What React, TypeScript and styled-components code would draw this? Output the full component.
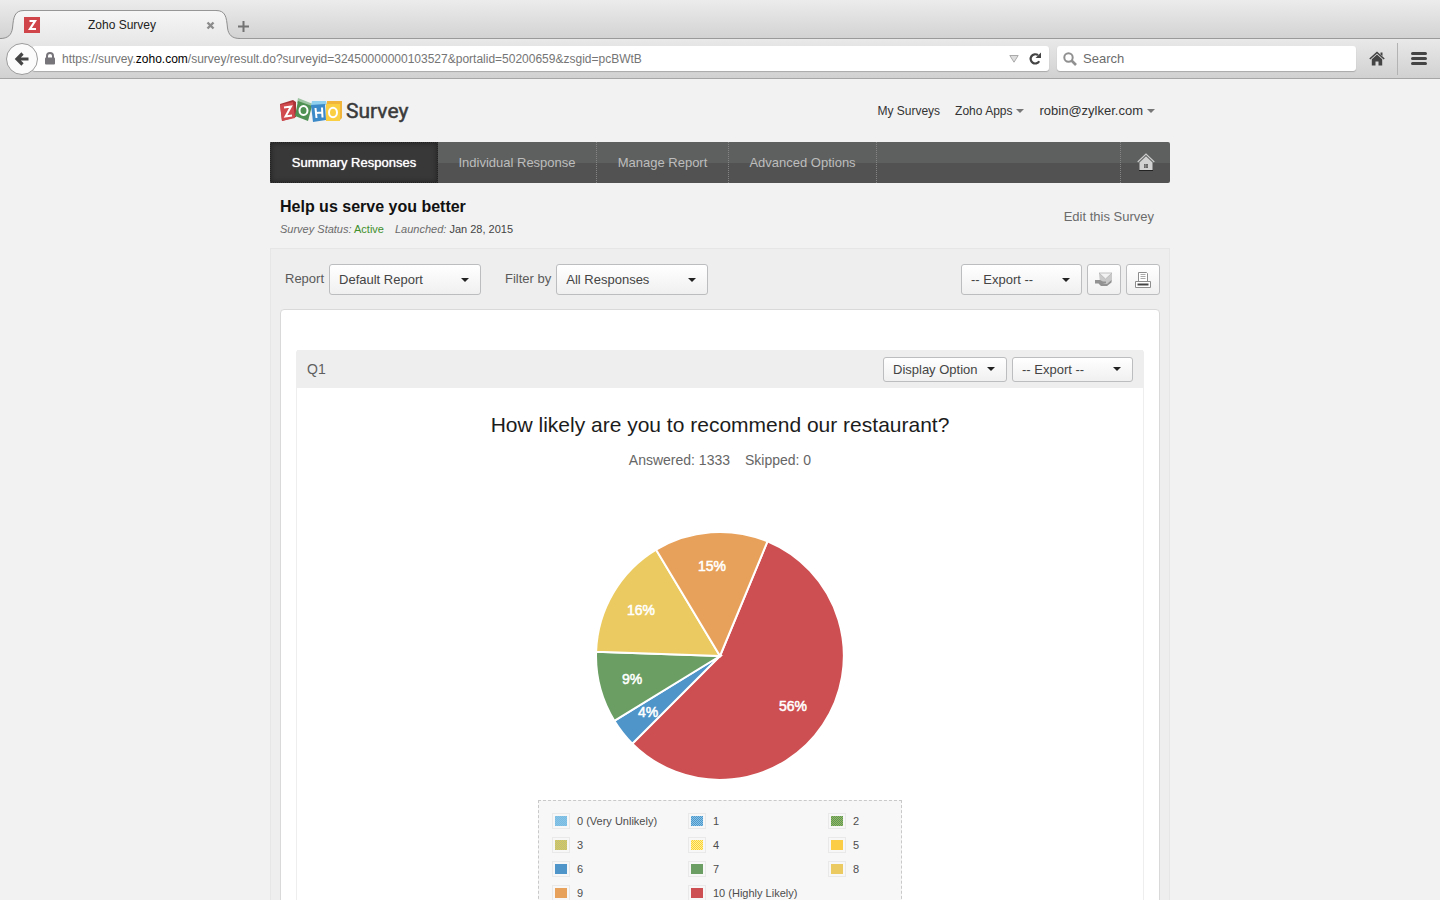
import React from "react";
import styled, { createGlobalStyle } from "styled-components";

const GlobalStyle = createGlobalStyle`
  *, *::before, *::after { box-sizing: border-box; }
  body { margin: 0; background: #f2f2f2; }
  body, button, input, select {
    font-family: "Liberation Sans", Arial, Helvetica, sans-serif;
    font-size: 13px;
  }
  button { padding: 0; border: 0; background: none; cursor: pointer; }
  a { color: inherit; text-decoration: none; }
  h1, h2, p, ul { margin: 0; padding: 0; }
  svg { display: block; flex: none; }
`;

/* ---------- browser window ---------- */

const Window = styled.div`
  display: flex;
  flex-direction: column;
  height: 100vh;
`;

const TabBar = styled.div`
  display: flex;
  align-items: flex-end;
  height: 39px;
  flex: none;
  background: linear-gradient(#ececec, #d2d2d2);
  box-shadow: inset 0 -1px #9a9a9a;
`;

const TabBody = styled.div`
  display: flex;
  align-items: center;
  width: 192px;
  height: 29px;
  border-top: 1px solid #979797;
  background: linear-gradient(#f6f6f6, #e9e9e9);
`;

const Favicon = styled.span`
  display: block;
  width: 16px;
  height: 16px;
`;

const TabTitle = styled.span`
  flex: 1;
  text-align: center;
  font-size: 12px;
  line-height: 16px;
  color: #222;
`;

const IconButton = styled.button<{ $width: number; $height: number }>`
  display: flex;
  align-items: center;
  justify-content: center;
  flex: none;
  width: ${(p) => p.$width}px;
  height: ${(p) => p.$height}px;
`;

const Toolbar = styled.div`
  display: flex;
  align-items: center;
  flex: none;
  height: 40px;
  padding-left: 6px;
  border-bottom: 1px solid #a6a6a6;
  background: linear-gradient(#e9e9e9, #d1d1d1);
`;

const BackButton = styled.button`
  display: flex;
  align-items: center;
  justify-content: center;
  flex: none;
  z-index: 1;
  width: 32px;
  height: 32px;
  border: 1px solid #9b9b9b;
  border-radius: 50%;
  background: #fbfbfb;
`;

const Field = styled.div<{ $width?: number }>`
  display: flex;
  align-items: center;
  flex: ${(p) => (p.$width ? `0 0 ${p.$width}px` : "1")};
  height: 25px;
  border-radius: 3px;
  background: #fff;
  box-shadow: 0 1px 1px #a9a9a9;
`;

const AddressField = styled(Field)`
  margin: 0 8px 0 -6px;
  padding-left: 12px;
`;

const Address = styled.span`
  flex: 1;
  padding-left: 6px;
  font-size: 12px;
  line-height: 16px;
  color: #757575;
  white-space: nowrap;

  strong { font-weight: 400; color: #000; }
`;

const SearchInput = styled.input`
  flex: 1;
  min-width: 0;
  padding: 0;
  border: 0;
  outline: 0;
  background: none;

  &::placeholder { color: #6c6c6c; opacity: 1; }
`;

const Divider = styled.span`
  width: 1px;
  height: 32px;
  background: #b3b3b3;
`;

/* ---------- page ---------- */

const Viewport = styled.main`
  flex: 1;
  min-height: 0;
  overflow-y: auto;
  scrollbar-width: none;
`;

const Page = styled.div`
  width: 100%;
  max-width: 900px;
  margin: 0 auto;
`;

const Header = styled.header`
  display: flex;
  align-items: center;
  justify-content: space-between;
  height: 63px;
  padding: 0 15px 0 10px;
`;

const Logo = styled.a`
  display: flex;
  align-items: center;
  gap: 4px;
`;

const LogoName = styled.span`
  font-family: Roboto, "Liberation Sans", Arial, sans-serif;
  font-size: 21px;
  line-height: 26px;
  color: #3b3b3b;
  -webkit-text-stroke: 0.5px #3b3b3b;
`;

const HeaderLinks = styled.nav`
  display: flex;
  align-items: center;
  gap: 15px;
  font-size: 12px;
  line-height: 16px;
  color: #333;
`;

const MenuLink = styled.a<{ $size?: number }>`
  display: flex;
  align-items: center;
  gap: 4px;
  font-size: ${(p) => p.$size ?? 12}px;
`;

const Caret = styled.span<{ $color: string }>`
  border: 4px solid transparent;
  border-top-color: ${(p) => p.$color};
  border-bottom-width: 0;
`;

const NavBar = styled.nav`
  display: flex;
  height: 41px;
  overflow: hidden;
  border-radius: 2px;
  background: linear-gradient(#5e605f 0 52%, #525252 52% 100%);
`;

const NavItem = styled.a<{ $width: number; $active?: boolean }>`
  display: flex;
  align-items: center;
  justify-content: center;
  flex: 0 0 ${(p) => p.$width}px;
  border-right: 1px dotted #858585;
  color: #bdbdbd;
  ${(p) =>
    p.$active &&
    `
    border: 1px dotted #222;
    background: #383838;
    box-shadow: inset 0 0 5px #222;
    color: #fff;
    text-shadow: 0 0 1px #fff;
  `}
`;

const NavHome = styled.a`
  display: flex;
  align-items: center;
  justify-content: center;
  width: 50px;
  margin-left: auto;
  padding-bottom: 2px;
  border-left: 1px dotted #858585;
`;

const TitleRow = styled.section`
  display: flex;
  align-items: center;
  justify-content: space-between;
  height: 65px;
  padding: 2px 16px 0 10px;
  color: #6b6b6b;
`;

const SurveyTitle = styled.h1`
  font-size: 16px;
  line-height: 20px;
  color: #111;
`;

const StatusLine = styled.p`
  display: flex;
  gap: 11px;
  padding: 5px 0 1px;
  font-size: 11px;
  line-height: 14px;
`;

const StatusValue = styled.span<{ $color: string }>`
  color: ${(p) => p.$color};
`;

const Panel = styled.section`
  padding: 15px 9px 0;
  border: 1px solid #e6e6e6;
  border-bottom: 0;
  background: #eee;
`;

const Controls = styled.div`
  display: flex;
  align-items: center;
  height: 31px;
  gap: 5px;
  padding-left: 5px;
`;

const ControlLabel = styled.label<{ $after?: number }>`
  margin-left: ${(p) => p.$after ?? 0}px;
  padding-bottom: 1px;
  line-height: 16px;
  color: #5a5a5a;
`;

const Spacer = styled.span`
  flex: 1;
`;

const SelectBox = styled.span<{ $width: number; $height: number }>`
  position: relative;
  flex: none;
  width: ${(p) => p.$width}px;
  height: ${(p) => p.$height}px;

  &::after {
    content: "";
    position: absolute;
    top: 50%;
    right: 12px;
    margin-top: -2px;
    border: 4px solid transparent;
    border-top: 4px solid #222;
    border-bottom-width: 0;
    pointer-events: none;
  }
`;

const SelectControl = styled.select`
  appearance: none;
  width: 100%;
  height: 100%;
  padding: 0 20px 0 9px;
  border: 1px solid #bcbdbf;
  border-radius: 3px;
  background: linear-gradient(#fff, #f0f0f0);
  color: #444;
`;

const SquareButton = styled.button`
  display: flex;
  align-items: center;
  justify-content: center;
  width: 34px;
  height: 31px;
  border: 1px solid #bcbdbf;
  border-radius: 3px;
  background: linear-gradient(#fff, #f0f0f0);
`;

const Paper = styled.div`
  margin-top: 14px;
  padding: 40px 15px 20px;
  border: 1px solid #d9d9d9;
  border-radius: 4px 4px 0 0;
  background: #fff;
`;

const Question = styled.article`
  border: 1px solid #eee;
  border-top: 0;
  border-radius: 3px 3px 0 0;
`;

const QuestionBar = styled.div`
  display: flex;
  align-items: center;
  gap: 5px;
  height: 38px;
  padding: 0 10px;
  background: #eee;
`;

const QuestionNumber = styled.span`
  flex: 1;
  font-size: 14px;
  line-height: 16px;
  color: #5f5f5f;
`;

const QuestionBody = styled.div`
  display: flex;
  flex-direction: column;
  align-items: center;
  padding: 23px 0 40px;
`;

const QuestionTitle = styled.h2`
  font-size: 21px;
  font-weight: 400;
  line-height: 28px;
  color: #1c1c1c;
`;

const Counts = styled.p`
  display: flex;
  gap: 15px;
  padding-top: 13px;
  font-size: 14px;
  line-height: 16px;
  color: #666;
`;

const Chart = styled.svg`
  margin: 63px 0 19px;
  font-size: 14px;
  text-anchor: middle;
`;

const Legend = styled.ul`
  display: grid;
  grid-template-columns: 136px 140px 1fr;
  row-gap: 8px;
  width: 364px;
  padding: 12px 0 12px 13px;
  border: 1px dashed #c9c9c9;
  background: #f7f7f7;
  list-style: none;
`;

const LegendItem = styled.li`
  display: flex;
  align-items: center;
  gap: 7px;
  height: 16px;
  font-size: 11px;
  line-height: 16px;
  color: #4d4d4d;
`;

const Swatch = styled.span<{ $color: string; $mix?: string }>`
  width: 18px;
  height: 16px;
  border: 1px solid #e9e9e9;
  padding: 2px;

  &::before {
    content: "";
    display: block;
    height: 100%;
    background: ${(p) =>
      p.$mix
        ? `repeating-conic-gradient(${p.$mix} 0 25%, ${p.$color} 0 50%) 0 0 / 2px 2px`
        : p.$color};
  }
`;

const TabEdge = ({ flip }: { flip?: boolean }) => (
  <svg width="24" height="29" viewBox="0 0 24 29" aria-hidden="true">
    <defs>
      <linearGradient id="tabfill" x1="0" y1="0" x2="0" y2="1">
        <stop offset="0" stopColor="#f6f6f6" />
        <stop offset="1" stopColor="#e9e9e9" />
      </linearGradient>
    </defs>
    <g transform={flip ? "matrix(-1 0 0 1 24 0)" : undefined}>
      <path
        d="M0 28.5C8 28.5 11.500 25 12.500 18C13.500 7 14.500 .5 24 .5V29H0Z"
        fill="url(#tabfill)"
      />
      <path
        d="M0 28.500C8 28.500 11.500 25 12.500 18C13.500 7 14.500 .5 24 .5"
        fill="none"
        stroke="#8f8f8f"
      />
    </g>
  </svg>
);

const LogoBlocks = () => (
  <svg width="62" height="26" viewBox="0 0 62 26" role="img" aria-label="Zoho">
    <path d="M0 6L13 2L16 4V19L2 23Z" fill="#a93438" />
    <path d="M0 7L13 4L15 20L2 23Z" fill="#d04a4e" />
    <path d="M18 0L33 6L31 10L17 5Z" fill="#9cc4a0" />
    <path d="M18 3L32 8L28 23L15 18Z" fill="#4f9153" />
    <path d="M32 3L46 3L47 7L31 8Z" fill="#8fd0ee" />
    <path d="M31 7L45 6L46 22L33 24Z" fill="#3d8ac8" />
    <path d="M47 3H62V20L60 22H46Z" fill="#f0b53a" />
    <path d="M46 6H60V23H46Z" fill="#fbcf42" />
    <g fill="none" stroke="#fff" strokeWidth="2">
      <path d="M4 9.500L11 8.500L5.500 18.500L12 17.500" />
      <ellipse cx="23.500" cy="12.500" rx="4" ry="4.500" />
      <path d="M35.500 10L36.500 20M42 9.500L42.500 19.500M36 15L42 14.500" />
      <ellipse cx="53" cy="14.500" rx="4" ry="4.800" />
    </g>
  </svg>
);

const CX = 125;
const CY = 125;
const R = 124;

/* angles run clockwise from twelve o'clock, in degrees */
const slices = [
  { from: 22.5, to: 225, color: "#ce4f51", label: "56%", x: 198, y: 180 },
  { from: 225, to: 238.5, color: "#4f95ca", label: "4%", x: 53, y: 186 },
  { from: 238.5, to: 272, color: "#6a9e63", label: "9%", x: 37, y: 153 },
  { from: 272, to: 329, color: "#ebcb61", label: "16%", x: 46, y: 84 },
  { from: 329, to: 382.5, color: "#e8a15a", label: "15%", x: 117, y: 40 },
];

const point = (deg: number) => {
  const a = (deg * Math.PI) / 180;
  return `${(CX + R * Math.sin(a)).toFixed(1)} ${(CY - R * Math.cos(a)).toFixed(1)}`;
};

const legend: { label: string; color: string; mix?: string }[] = [
  { label: "0 (Very Unlikely)", color: "#86c5e8", mix: "#7ab9e0" },
  { label: "1", color: "#86c5e8", mix: "#4f95ca" },
  { label: "2", color: "#9fb561", mix: "#559a59" },
  { label: "3", color: "#e3cb5a", mix: "#b1bd83" },
  { label: "4", color: "#fff09a", mix: "#fbd034" },
  { label: "5", color: "#fbcd47" },
  { label: "6", color: "#4f95ca" },
  { label: "7", color: "#6a9e63" },
  { label: "8", color: "#ebcb61" },
  { label: "9", color: "#e8a15a" },
  { label: "10 (Highly Likely)", color: "#ce4f51" },
];

const Dropdown = ({
  id,
  value,
  label,
  width,
  height,
}: {
  id: string;
  value: string;
  label?: string;
  width: number;
  height: number;
}) => (
  <SelectBox $width={width} $height={height}>
    <SelectControl id={id} aria-label={label}>
      <option>{value}</option>
    </SelectControl>
  </SelectBox>
);

const BrowserChrome = () => (
  <>
    <TabBar>
      <TabEdge />
      <TabBody>
        <Favicon>
          <svg width="16" height="16" viewBox="0 0 16 16" aria-hidden="true">
            <path d="M0 0H16V16H0Z" fill="#cf4549" />
            <path d="M5.500 4H11L6 12H12" fill="none" stroke="#fff" strokeWidth="2.200" />
          </svg>
        </Favicon>
        <TabTitle>Zoho Survey</TabTitle>
        <IconButton $width={12} $height={20} aria-label="Close tab">
          <svg width="9" height="9" viewBox="0 0 9 9">
            <path d="M1.500 1.500L7.500 7.500M7.500 1.500L1.500 7.500" stroke="#8c8c8c" strokeWidth="2.400" />
          </svg>
        </IconButton>
      </TabBody>
      <TabEdge flip />
      <IconButton $width={6} $height={26} aria-label="New tab">
        <svg width="11" height="11" viewBox="0 0 11 11">
          <path d="M5.500 0V11M0 5.500H11" stroke="#737373" strokeWidth="2" />
        </svg>
      </IconButton>
    </TabBar>
    <Toolbar>
      <BackButton aria-label="Back">
        <svg width="16" height="16" viewBox="0 0 16 16">
          <path d="M14.500 8H3M8.500 2.500L3 8L8.500 13.500" fill="none" stroke="#444" strokeWidth="3.200" />
        </svg>
      </BackButton>
      <AddressField>
        <svg width="12" height="13" viewBox="0 0 12 13" aria-hidden="true">
          <path d="M3 6V4A3 3 0 0 1 9 4V6" fill="none" stroke="#77757a" strokeWidth="2" />
          <rect x="1" y="5.500" width="10" height="7" rx="1" fill="#77757a" />
        </svg>
        <Address>
          https://survey.<strong>zoho.com</strong>
          /survey/result.do?surveyid=32450000000103527&amp;portalid=50200659&amp;zsgid=pcBWtB
        </Address>
        <IconButton $width={16} $height={24} aria-label="Show history">
          <svg width="10" height="8" viewBox="0 0 10 8">
            <path d="M.8 .5H9.200L5 7.200Z" fill="#ddd" stroke="#aaa" />
          </svg>
        </IconButton>
        <IconButton $width={27} $height={24} aria-label="Reload">
          <svg width="13" height="13" viewBox="0 0 13 13">
            <path d="M9 3.200A4.600 4.600 0 1 0 10.200 9.200" fill="none" stroke="#444" strokeWidth="2.200" />
            <path d="M12 .5V6H6.500Z" fill="#444" />
          </svg>
        </IconButton>
      </AddressField>
      <Field $width={299}>
        <IconButton $width={26} $height={24} aria-label="Search">
          <svg width="14" height="14" viewBox="0 0 14 14">
            <circle cx="5.500" cy="5.500" r="4.200" fill="none" stroke="#909090" strokeWidth="2" />
            <path d="M8.500 8.500L13 13" stroke="#909090" strokeWidth="2.600" />
          </svg>
        </IconButton>
        <SearchInput type="text" placeholder="Search" aria-label="Search the web" />
      </Field>
      <IconButton $width={41} $height={32} aria-label="Home page">
        <svg width="16" height="15" viewBox="0 0 16 15">
          <path d="M.8 8L8 1.500L15.200 8" fill="none" stroke="#444" strokeWidth="1.600" />
          <path d="M11.500 1.500H13.500V5L11.500 3.500Z" fill="#444" />
          <path d="M2.800 8.200L8 3.600L13.200 8.200V14.500H9.500V10.500H6.500V14.500H2.800Z" fill="#444" />
        </svg>
      </IconButton>
      <Divider />
      <IconButton $width={42} $height={32} aria-label="Open menu">
        <svg width="16" height="13" viewBox="0 0 16 13">
          <path d="M1.500 1.500H14.500M1.500 6.500H14.500M1.500 11.500H14.500" stroke="#444" strokeWidth="3" strokeLinecap="round" />
        </svg>
      </IconButton>
    </Toolbar>
  </>
);

export default function App() {
  return (
    <Window>
      <GlobalStyle />
      <BrowserChrome />
      <Viewport>
        <Page>
          <Header>
            <Logo href="#">
              <LogoBlocks />
              <LogoName>Survey</LogoName>
            </Logo>
            <HeaderLinks>
              <MenuLink href="#">My Surveys</MenuLink>
              <MenuLink href="#">
                Zoho Apps <Caret $color="#777" />
              </MenuLink>
              <MenuLink href="#" $size={13}>
                robin@zylker.com <Caret $color="#777" />
              </MenuLink>
            </HeaderLinks>
          </Header>

          <NavBar>
            <NavItem href="#" $width={168} $active>Summary Responses</NavItem>
            <NavItem href="#" $width={159}>Individual Response</NavItem>
            <NavItem href="#" $width={132}>Manage Report</NavItem>
            <NavItem href="#" $width={148}>Advanced Options</NavItem>
            <NavHome href="#" aria-label="Home">
              <svg width="18" height="18" viewBox="0 0 18 18">
                <path d="M.7 9L9 1L17.300 9" fill="none" stroke="#ccc" strokeWidth="1.200" />
                <path d="M2.500 9.500L9 3.200L15.500 9.500V17H2.500Z" fill="#d2d2d2" />
                <path d="M7 11H11V15H7Z" fill="#666" />
                <path d="M8.500 11V15M7 13H11" stroke="#999" strokeWidth=".6" />
                <path d="M2 17.500H16" stroke="#222" />
              </svg>
            </NavHome>
          </NavBar>

          <TitleRow>
            <div>
              <SurveyTitle>Help us serve you better</SurveyTitle>
              <StatusLine>
                <span>
                  <em>Survey Status:</em> <StatusValue $color="#3f8f2c">Active</StatusValue>
                </span>
                <span>
                  <em>Launched:</em> <StatusValue $color="#444">Jan 28, 2015</StatusValue>
                </span>
              </StatusLine>
            </div>
            <a href="#">Edit this Survey</a>
          </TitleRow>

          <Panel>
            <Controls>
              <ControlLabel htmlFor="report">Report</ControlLabel>
              <Dropdown id="report" value="Default Report" width={152} height={31} />
              <ControlLabel htmlFor="filter" $after={19}>Filter by</ControlLabel>
              <Dropdown id="filter" value="All Responses" width={152} height={31} />
              <Spacer />
              <Dropdown id="export" label="Export report" value="-- Export --" width={121} height={31} />
              <SquareButton aria-label="Share by mail">
                <svg width="18" height="15" viewBox="0 0 18 15">
                  <path d="M4 1H17V9L14 12H5Z" fill="#c9c9c9" />
                  <path d="M4 1H17L10.500 7Z" fill="#f2f2f2" stroke="#b5b5b5" strokeWidth=".8" />
                  <path d="M0 8H5L8 9.500H11L11 11H7.500L12 12L16.500 8V10.500L12 14H6L3.500 11.500H0Z" fill="#929292" />
                </svg>
              </SquareButton>
              <SquareButton aria-label="Print">
                <svg width="18" height="18" viewBox="0 0 18 18" fill="#fff" stroke="#8d8d8d">
                  <path d="M4.500 10V1.500H12.500L13.500 2.500V10" />
                  <path d="M6.500 3.500H11.500M6.500 5.500H11.500M6.500 7.500H11.500" stroke="#aaa" />
                  <path d="M1.500 10.500H16.500V16.500H1.500Z" />
                  <path d="M3.500 13.500H14.500" stroke="#444" strokeWidth="2" />
                </svg>
              </SquareButton>
            </Controls>

            <Paper>
              <Question>
                <QuestionBar>
                  <QuestionNumber>Q1</QuestionNumber>
                  <Dropdown id="display" label="Display option" value="Display Option" width={124} height={25} />
                  <Dropdown id="q-export" label="Export question" value="-- Export --" width={121} height={25} />
                </QuestionBar>
                <QuestionBody>
                  <QuestionTitle>How likely are you to recommend our restaurant?</QuestionTitle>
                  <Counts>
                    <span>Answered: 1333</span>
                    <span>Skipped: 0</span>
                  </Counts>
                  <Chart width="250" height="250" viewBox="0 0 250 250" role="img" aria-label="Share of answers">
                    {slices.map((s) => (
                      <path
                        key={s.label}
                        d={`M${CX} ${CY}L${point(s.from)}A${R} ${R} 0 ${s.to - s.from > 180 ? 1 : 0} 1 ${point(s.to)}Z`}
                        fill={s.color}
                        stroke="#fff"
                        strokeWidth="2"
                      />
                    ))}
                    {slices.map((s) => (
                      <text key={s.label} x={s.x} y={s.y} fill="#fff" stroke="#fff" strokeWidth=".5">
                        {s.label}
                      </text>
                    ))}
                  </Chart>
                  <Legend>
                    {legend.map((item) => (
                      <LegendItem key={item.label}>
                        <Swatch $color={item.color} $mix={item.mix} />
                        {item.label}
                      </LegendItem>
                    ))}
                  </Legend>
                </QuestionBody>
              </Question>
            </Paper>
          </Panel>
        </Page>
      </Viewport>
    </Window>
  );
}
